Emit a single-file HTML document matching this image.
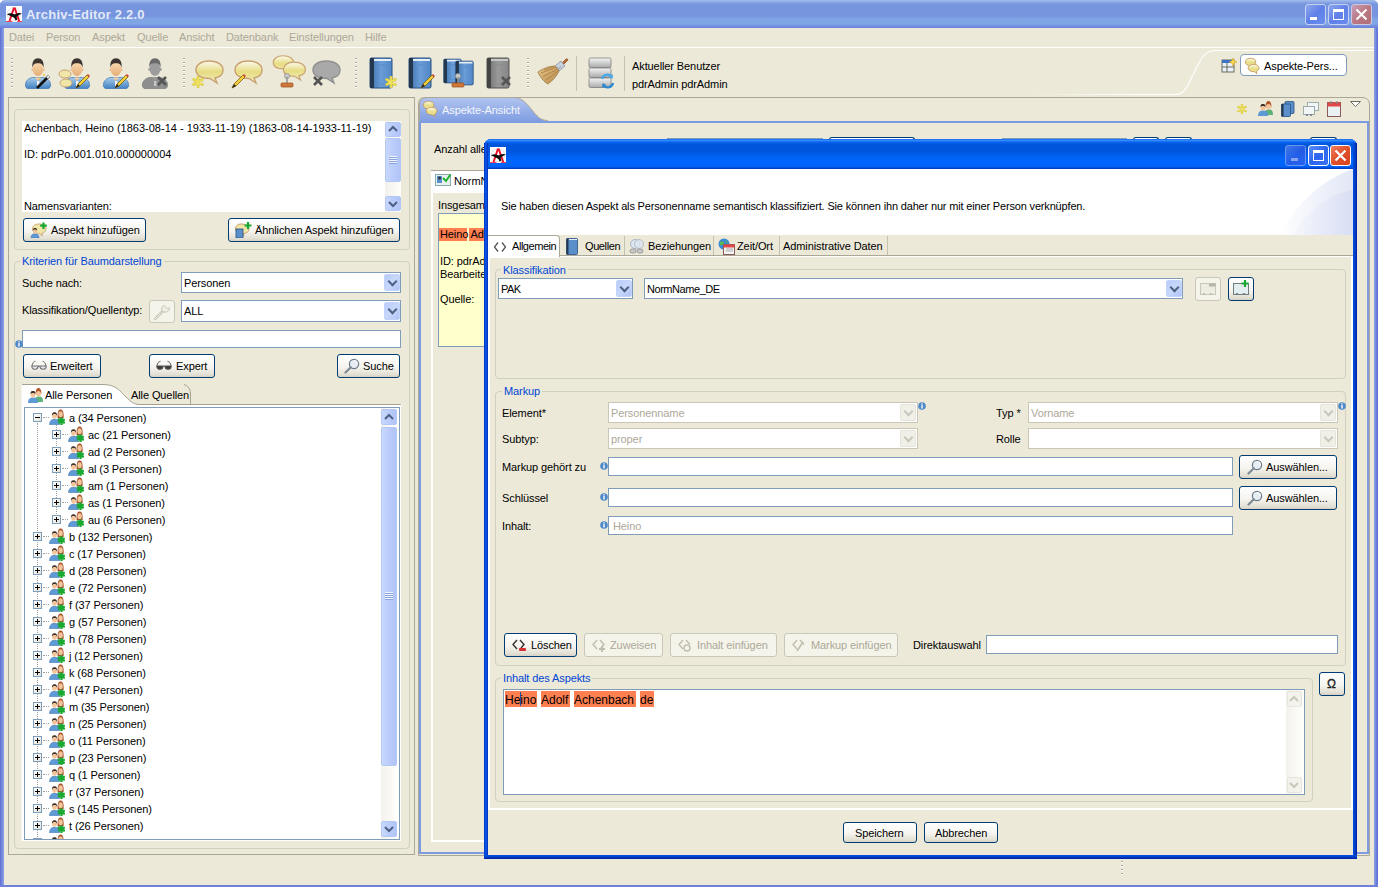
<!DOCTYPE html>
<html><head><meta charset="utf-8">
<style>
*{box-sizing:border-box}
html,body{margin:0;padding:0}
body{width:1378px;height:887px;overflow:hidden;position:relative;background:#ECE9D8;font-family:"Liberation Sans",sans-serif;font-size:11px;line-height:13px;color:#000;letter-spacing:-0.1px}
.a{position:absolute}
.t{position:absolute;white-space:nowrap;line-height:13px}
.g{color:#ACA899}
.bl{color:#0046D5}
.grp{position:absolute;border:1px solid #D0D0BF;border-radius:4px}
.lbl{position:absolute;background:#ECE9D8;padding:0 2px;white-space:nowrap;color:#0046D5;line-height:13px}
.fld{position:absolute;background:#fff;border:1px solid #7F9DB9}
.dfld{position:absolute;background:#fff;border:1px solid #CBC7B8}
.btn{position:absolute;border:1px solid #003C74;border-radius:3px;background:linear-gradient(#FFFFFF 0%,#F5F4EF 55%,#E3E0D4 88%,#D6D0C5 100%)}
.dbtn{position:absolute;border:1px solid #C9C7BA;border-radius:3px;background:#F5F4EA}
.cbb{position:absolute;width:16px;border-radius:2px;background:linear-gradient(135deg,#B9CCFA,#C7D8FB 50%,#AFC4F6);border:1px solid #C3D3FD}
.cbb:after{content:"";position:absolute;left:4px;top:3px;width:5px;height:5px;border-right:2px solid #4D6185;border-bottom:2px solid #4D6185;transform:rotate(45deg)}
.dcbb{position:absolute;width:16px;border-radius:2px;background:#F0EFE8;border:1px solid #E6E4D8}
.dcbb:after{content:"";position:absolute;left:4px;top:3px;width:5px;height:5px;border-right:2px solid #C9C7BA;border-bottom:2px solid #C9C7BA;transform:rotate(45deg)}

.sbb{border:1px solid #B4C8F6;border-radius:2px;background:linear-gradient(90deg,#C9D8FC,#BCCEFB 40%,#B0C4F7)}
.grip{width:8px;height:8px;background:repeating-linear-gradient(#EEF3FE 0 1px,#8CA4DC 1px 2px)}
.ex{width:9px;height:9px;border:1px solid #7B9EBD;background:linear-gradient(135deg,#fff,#E6E3D6)}
.dotl{height:1px;border-top:1px dotted #A0A0A0}
</style></head><body>
<!-- MAIN TITLE BAR -->
<div class="a" style="left:0;top:0;width:1378px;height:28px;background:linear-gradient(#A3BCEC 0px,#8FAAE6 2px,#7794DE 4px,#7794DE 16px,#7FA5E5 19px,#7FA5E5 24px,#6F84DC 27px,#6F84DC 28px)"></div>
<!-- main borders -->
<div class="a" style="left:0;top:28px;width:4px;height:859px;background:linear-gradient(90deg,#5F6FD3,#7A8EDD 60%,#8DA4E6)"></div>
<div class="a" style="left:1374px;top:28px;width:4px;height:859px;background:linear-gradient(90deg,#8DA4E6,#6C80D8 60%,#5F6FD3)"></div>
<div class="a" style="left:0;top:885px;width:1378px;height:2px;background:#7180DA"></div>
<div class="a" style="left:4px;top:47px;width:1370px;height:1px;background:#fff"></div>


<!-- title content -->
<svg class="a" style="left:6px;top:6px" width="16" height="16"><use href="#appicon"/></svg>
<div class="t" style="left:26px;top:7px;font-size:13px;line-height:15px;font-weight:bold;color:#E3EAF8;letter-spacing:0.2px">Archiv-Editor 2.2.0</div>
<div class="a" style="left:1305px;top:4px;width:21px;height:21px;border:1px solid #C6D2F2;border-radius:3px;background:linear-gradient(135deg,#8FA8EE,#5F80E8 50%,#6B8DEE)"></div>
<div class="a" style="left:1310px;top:17px;width:7px;height:3px;background:#fff"></div>
<div class="a" style="left:1328px;top:4px;width:21px;height:21px;border:1px solid #C6D2F2;border-radius:3px;background:linear-gradient(135deg,#8FA8EE,#5F80E8 50%,#6B8DEE)"></div>
<div class="a" style="left:1333px;top:9px;width:11px;height:11px;border:1px solid #fff;border-top-width:3px"></div>
<div class="a" style="left:1351px;top:4px;width:21px;height:21px;border:1px solid #D0C8E0;border-radius:3px;background:linear-gradient(135deg,#C8A0B8,#B97883 50%,#B06E78)"></div>
<svg class="a" style="left:1351px;top:4px" width="21" height="21"><path d="M5.5 5.5 L15.5 15.5 M15.5 5.5 L5.5 15.5" stroke="#fff" stroke-width="2"/></svg>
<svg class="a" style="left:0;top:0" width="6" height="6"><path d="M0 0 H4 C2 0.5 0.5 2 0 4Z" fill="#fff"/></svg>
<svg class="a" style="left:1372px;top:0" width="6" height="6"><path d="M6 0 H2 C4 0.5 5.5 2 6 4Z" fill="#fff"/></svg>
<!-- menu -->
<div class="t g" style="left:9px;top:31px">Datei</div>
<div class="t g" style="left:46px;top:31px">Person</div>
<div class="t g" style="left:92px;top:31px">Aspekt</div>
<div class="t g" style="left:137px;top:31px">Quelle</div>
<div class="t g" style="left:179px;top:31px">Ansicht</div>
<div class="t g" style="left:226px;top:31px">Datenbank</div>
<div class="t g" style="left:289px;top:31px">Einstellungen</div>
<div class="t g" style="left:365px;top:31px">Hilfe</div>
<!-- toolbar -->
<div class="a" style="left:11px;top:58px;width:2px;height:31px;background:repeating-linear-gradient(#ACA899 0 1px,#fff 1px 2px,transparent 2px 4px)"></div>
<svg class="a" style="left:22px;top:57px" width="32" height="32"><use href="#person"/></svg>
<svg class="a" style="left:36px;top:73px" width="16" height="16"><use href="#wand"/></svg>
<svg class="a" style="left:61px;top:57px" width="32" height="32"><use href="#person"/></svg>
<svg class="a" style="left:58px;top:69px" width="16" height="20"><ellipse cx="7" cy="5" rx="6" ry="4" fill="#F0E6A8" stroke="#C8A070"/><ellipse cx="8" cy="14" rx="6" ry="4" fill="#F0E6A8" stroke="#C8A070"/></svg>
<svg class="a" style="left:75px;top:73px" width="16" height="16"><use href="#pencil"/></svg>
<svg class="a" style="left:100px;top:57px" width="32" height="32"><use href="#person"/></svg>
<svg class="a" style="left:114px;top:73px" width="16" height="16"><use href="#pencil"/></svg>
<svg class="a" style="left:139px;top:57px" width="32" height="32"><use href="#personG"/></svg>
<svg class="a" style="left:156px;top:75px" width="12" height="12"><use href="#cross"/></svg>
<div class="a" style="left:183px;top:58px;width:2px;height:31px;background:repeating-linear-gradient(#ACA899 0 1px,#fff 1px 2px,transparent 2px 4px)"></div>
<svg class="a" style="left:193px;top:56px" width="32" height="32"><use href="#bubble"/></svg>
<svg class="a" style="left:192px;top:76px" width="12" height="12"><use href="#star"/></svg>
<svg class="a" style="left:232px;top:56px" width="32" height="32"><use href="#bubble"/></svg>
<svg class="a" style="left:231px;top:73px" width="16" height="16"><use href="#pencil"/></svg>
<svg class="a" style="left:271px;top:52px" width="24" height="24"><use href="#bubble"/></svg>
<svg class="a" style="left:281px;top:58px" width="26" height="26"><use href="#bubble"/></svg>
<svg class="a" style="left:279px;top:72px" width="16" height="16"><use href="#stamp"/></svg>
<svg class="a" style="left:310px;top:56px" width="32" height="32"><use href="#bubbleG"/></svg>
<svg class="a" style="left:312px;top:75px" width="12" height="12"><use href="#cross"/></svg>
<div class="a" style="left:355px;top:58px;width:2px;height:31px;background:repeating-linear-gradient(#ACA899 0 1px,#fff 1px 2px,transparent 2px 4px)"></div>
<svg class="a" style="left:369px;top:57px" width="24" height="32"><use href="#book"/></svg>
<svg class="a" style="left:385px;top:76px" width="12" height="12"><use href="#star"/></svg>
<svg class="a" style="left:408px;top:57px" width="24" height="32"><use href="#book"/></svg>
<svg class="a" style="left:420px;top:73px" width="16" height="16"><use href="#pencil"/></svg>
<svg class="a" style="left:443px;top:58px" width="19" height="26"><use href="#book"/></svg>
<svg class="a" style="left:455px;top:60px" width="19" height="26"><use href="#book"/></svg>
<svg class="a" style="left:450px;top:72px" width="16" height="16"><use href="#stamp"/></svg>
<svg class="a" style="left:486px;top:57px" width="24" height="32"><use href="#bookG"/></svg>
<svg class="a" style="left:500px;top:75px" width="12" height="12"><use href="#cross"/></svg>
<div class="a" style="left:527px;top:58px;width:2px;height:31px;background:repeating-linear-gradient(#ACA899 0 1px,#fff 1px 2px,transparent 2px 4px)"></div>
<svg class="a" style="left:537px;top:57px" width="32" height="28"><defs><linearGradient id="gBr" x1="0" y1="0" x2="1" y2="1"><stop offset="0" stop-color="#E8C890"/><stop offset="1" stop-color="#B88848"/></linearGradient></defs>
<path d="M25 6 L29 2 C30 1 31.5 2.5 30.5 3.5 L26.5 7.5Z" fill="#B8642C" stroke="#804020" stroke-width="0.6"/>
<path d="M18 9 L24 4 L28 9 L22 14Z" fill="#C8D0DC" stroke="#7C8494" stroke-width="0.7"/>
<path d="M19 12 L21 10 M21 13 L24 9" stroke="#8890A0" stroke-width="0.8"/>
<path d="M1 15 C5 12 12 9 18 9 L22 14 C20 19 15 24 11 27 C7 25 3 20 1 15Z" fill="url(#gBr)" stroke="#A07840" stroke-width="0.8"/>
<path d="M4 16 L18.5 10.5 M6 19.5 L20 12.5 M9 23 L21 14 M7 13 L17 9.5" stroke="#A47A3C" stroke-width="0.8"/>
</svg>
<div class="a" style="left:576px;top:56px;width:1px;height:35px;background:#C5C2B2"></div>
<svg class="a" style="left:588px;top:57px" width="28" height="32"><defs><linearGradient id="gDb" x1="0" y1="0" x2="0" y2="1"><stop offset="0" stop-color="#F4F4F4"/><stop offset="0.5" stop-color="#D0D0D0"/><stop offset="1" stop-color="#A8A8A8"/></linearGradient></defs>
<rect x="1" y="1" width="22" height="9.5" rx="1.5" fill="url(#gDb)" stroke="#808080" stroke-width="0.8"/>
<rect x="1" y="11" width="22" height="9.5" rx="1.5" fill="url(#gDb)" stroke="#808080" stroke-width="0.8"/>
<rect x="1" y="21" width="22" height="9.5" rx="1.5" fill="url(#gDb)" stroke="#808080" stroke-width="0.8"/>
<path d="M14 22 A5.5 5.5 0 0 1 23.5 19.5" fill="none" stroke="#48A8E8" stroke-width="2.4"/><path d="M25 17 L24.5 22 L20.5 20Z" fill="#48A8E8"/>
<path d="M25 26 A5.5 5.5 0 0 1 15.5 28.5" fill="none" stroke="#2E88D0" stroke-width="2.4"/><path d="M14 31 L14.5 26 L18.5 28Z" fill="#2E88D0"/>
</svg>
<div class="a" style="left:624px;top:56px;width:1px;height:35px;background:#C5C2B2"></div>
<div class="t" style="left:632px;top:60px">Aktueller Benutzer</div>
<div class="t" style="left:632px;top:78px">pdrAdmin pdrAdmin</div>
<!-- perspective switcher -->
<div class="a" style="left:1030px;top:94px;width:148px;height:1px;background:linear-gradient(90deg,rgba(255,255,255,0),#fff 70%)"></div><svg class="a" style="left:1170px;top:48px" width="204" height="48"><path d="M0 46.5 L6 46.5 C12 46.5 15 43 18 37 C22 29 26 20 30 13 C34 6 38 2.5 46 2.5 L204 2.5" fill="none" stroke="#fff" stroke-width="1.1"/></svg>
<svg class="a" style="left:1221px;top:58px" width="16" height="15"><rect x="1" y="2" width="12" height="12" fill="#EAF2FB" stroke="#6B6B5A"/><rect x="1" y="2" width="12" height="3" fill="#3A73C8"/><path d="M6 5 V14 M1 9 H13" stroke="#6B6B5A"/><path d="M12 0 l1.2 2.8 2.8 1.2 -2.8 1.2 -1.2 2.8 -1.2 -2.8 -2.8 -1.2 2.8 -1.2z" fill="#F6D84A" stroke="#C89A20" stroke-width="0.5"/></svg>
<div class="a" style="left:1240px;top:54px;width:107px;height:22px;border:1px solid #7F9DB9;border-radius:4px;background:#fff"></div>
<svg class="a" style="left:1245px;top:57px" width="16" height="18"><use href="#bub2"/></svg>
<div class="t" style="left:1264px;top:60px">Aspekte-Pers...</div>


<!-- LEFT PANEL -->
<div class="a" style="left:8px;top:97px;width:407px;height:758px;border:1px solid #ACA899;"></div>
<div class="grp" style="left:14px;top:109px;width:396px;height:141px"></div>
<div class="a" style="left:22px;top:121px;width:379px;height:91px;background:#fff"></div>
<div class="t" style="left:24px;top:122px;letter-spacing:0">Achenbach, Heino (1863-08-14 - 1933-11-19) (1863-08-14-1933-11-19)</div>
<div class="t" style="left:24px;top:148px;letter-spacing:0">ID: pdrPo.001.010.000000004</div>
<div class="a" style="left:22px;top:121px;width:363px;height:91px;overflow:hidden"><div class="t" style="left:2px;top:79px">Namensvarianten:</div></div>
<!-- scrollbar -->
<div class="a" style="left:385px;top:121px;width:16px;height:91px;background:linear-gradient(90deg,#F3F1EC,#FEFEFB)"></div>
<div class="a sbb" style="left:385px;top:122px;width:16px;height:15px"></div>
<svg class="a" style="left:385px;top:121px" width="16" height="16"><use href="#upA"/></svg>
<div class="a sbb" style="left:385px;top:138px;width:16px;height:44px"></div>
<div class="a grip" style="left:389px;top:156px"></div>
<div class="a sbb" style="left:385px;top:196px;width:16px;height:15px"></div>
<svg class="a" style="left:385px;top:196px" width="16" height="16"><use href="#dnA"/></svg>
<div class="btn" style="left:23px;top:218px;width:123px;height:24px"></div>
<svg class="a" style="left:30px;top:222px" width="18" height="16"><use href="#addasp"/></svg>
<div class="t" style="left:51px;top:224px">Aspekt hinzufügen</div>
<div class="btn" style="left:228px;top:218px;width:172px;height:24px"></div>
<svg class="a" style="left:235px;top:222px" width="18" height="16"><use href="#addasp2"/></svg>
<div class="t" style="left:255px;top:224px">Ähnlichen Aspekt hinzufügen</div>
<!-- Kriterien -->
<div class="grp" style="left:14px;top:261px;width:396px;height:588px"></div>
<div class="lbl" style="left:20px;top:255px">Kriterien für Baumdarstellung</div>
<div class="t" style="left:22px;top:277px">Suche nach:</div>
<div class="fld" style="left:181px;top:272px;width:220px;height:21px"></div>
<div class="t" style="left:184px;top:277px">Personen</div>
<div class="cbb" style="left:384px;top:274px;height:17px"></div>
<div class="t" style="left:22px;top:304px">Klassifikation/Quellentyp:</div>
<div class="dbtn" style="left:149px;top:300px;width:26px;height:23px"></div>
<svg class="a" style="left:149px;top:299px" width="26" height="24"><path d="M6 20 L14.5 11.5" stroke="#C9C6B6" stroke-width="2.6" stroke-linecap="round"/><path d="M6 20 L14.5 11.5" stroke="#F4F3EC" stroke-width="1" stroke-linecap="round" stroke-dasharray="1 1"/><path d="M13 12.5 C12 10 13 7 15.5 6.5 L17 8.5 L18.5 10 L20.5 8.5 C21 11 18.5 13.5 15.5 13Z" fill="#F0EFE6" stroke="#C9C6B6" stroke-width="1"/></svg>
<div class="fld" style="left:181px;top:300px;width:220px;height:22px"></div>
<div class="t" style="left:184px;top:305px">ALL</div>
<div class="cbb" style="left:384px;top:302px;height:18px"></div>
<div class="fld" style="left:22px;top:330px;width:379px;height:18px"></div>
<svg class="a" style="left:15px;top:340px" width="8" height="8"><use href="#info"/></svg>
<div class="btn" style="left:23px;top:354px;width:78px;height:24px"></div>
<svg class="a" style="left:31px;top:360px" width="16" height="10"><use href="#glass"/></svg>
<div class="t" style="left:50px;top:360px">Erweitert</div>
<div class="btn" style="left:149px;top:354px;width:66px;height:24px"></div>
<svg class="a" style="left:156px;top:360px" width="16" height="10"><use href="#glassD"/></svg>
<div class="t" style="left:176px;top:360px">Expert</div>
<div class="btn" style="left:337px;top:354px;width:63px;height:24px"></div>
<svg class="a" style="left:344px;top:358px" width="16" height="16"><use href="#mag"/></svg>
<div class="t" style="left:363px;top:360px">Suche</div>
<!-- tabs -->
<div class="a" style="left:22px;top:404px;width:379px;height:437px;background:#fff"></div>
<div class="a" style="left:21px;top:384px;width:1px;height:457px;background:#F4F3EE"></div>
<svg class="a" style="left:20px;top:383px" width="382" height="23"><path d="M2 23 V1.5 L83 1.5 C96 1.5 100 8 106 14 C111 19 114 21.5 120 21.5 L382 21.5 V23Z" fill="#fff"/><path d="M2 1.5 L83 1.5 C96 1.5 100 8 106 14 C111 19 114 21.5 120 21.5 L381 21.5" fill="none" stroke="#A5A28F"/><path d="M164 1.5 C168 3 170.5 6 170.5 10 L170.5 21.5" fill="none" stroke="#A5A28F"/></svg>
<svg class="a" style="left:27px;top:387px" width="16" height="16"><use href="#people"/></svg>
<div class="t" style="left:45px;top:389px">Alle Personen</div>
<div class="t" style="left:131px;top:389px">Alle Quellen</div>
<div class="a" style="left:24px;top:407px;width:376px;height:433px;background:#fff;border:1px solid #7F9DB9;overflow:hidden">
<div class="a" style="left:-24px;top:-407px;width:420px;height:900px">
<div class="a" style="left:36px;top:422px;width:1px;height:420px;border-left:1px dotted #A0A0A0"></div>
<div class="a" style="left:55px;top:422px;width:1px;height:93px;border-left:1px dotted #A0A0A0"></div>
<div class="a ex" style="left:32px;top:412px"></div>
<div class="a" style="left:34px;top:416px;width:5px;height:1px;background:#000"></div>
<div class="a dotl" style="left:42px;top:416px;width:6px"></div>
<svg class="a" style="left:48px;top:408px" width="16" height="16"><use href="#treeico"/></svg>
<div class="t" style="left:68px;top:411px">a (34 Personen)</div>
<div class="a ex" style="left:51px;top:429px"></div>
<div class="a" style="left:55px;top:431px;width:1px;height:5px;background:#000"></div>
<div class="a" style="left:53px;top:433px;width:5px;height:1px;background:#000"></div>
<div class="a dotl" style="left:61px;top:433px;width:6px"></div>
<svg class="a" style="left:67px;top:425px" width="16" height="16"><use href="#treeico"/></svg>
<div class="t" style="left:87px;top:428px">ac (21 Personen)</div>
<div class="a ex" style="left:51px;top:446px"></div>
<div class="a" style="left:55px;top:448px;width:1px;height:5px;background:#000"></div>
<div class="a" style="left:53px;top:450px;width:5px;height:1px;background:#000"></div>
<div class="a dotl" style="left:61px;top:450px;width:6px"></div>
<svg class="a" style="left:67px;top:442px" width="16" height="16"><use href="#treeico"/></svg>
<div class="t" style="left:87px;top:445px">ad (2 Personen)</div>
<div class="a ex" style="left:51px;top:463px"></div>
<div class="a" style="left:55px;top:465px;width:1px;height:5px;background:#000"></div>
<div class="a" style="left:53px;top:467px;width:5px;height:1px;background:#000"></div>
<div class="a dotl" style="left:61px;top:467px;width:6px"></div>
<svg class="a" style="left:67px;top:459px" width="16" height="16"><use href="#treeico"/></svg>
<div class="t" style="left:87px;top:462px">al (3 Personen)</div>
<div class="a ex" style="left:51px;top:480px"></div>
<div class="a" style="left:55px;top:482px;width:1px;height:5px;background:#000"></div>
<div class="a" style="left:53px;top:484px;width:5px;height:1px;background:#000"></div>
<div class="a dotl" style="left:61px;top:484px;width:6px"></div>
<svg class="a" style="left:67px;top:476px" width="16" height="16"><use href="#treeico"/></svg>
<div class="t" style="left:87px;top:479px">am (1 Personen)</div>
<div class="a ex" style="left:51px;top:497px"></div>
<div class="a" style="left:55px;top:499px;width:1px;height:5px;background:#000"></div>
<div class="a" style="left:53px;top:501px;width:5px;height:1px;background:#000"></div>
<div class="a dotl" style="left:61px;top:501px;width:6px"></div>
<svg class="a" style="left:67px;top:493px" width="16" height="16"><use href="#treeico"/></svg>
<div class="t" style="left:87px;top:496px">as (1 Personen)</div>
<div class="a ex" style="left:51px;top:514px"></div>
<div class="a" style="left:55px;top:516px;width:1px;height:5px;background:#000"></div>
<div class="a" style="left:53px;top:518px;width:5px;height:1px;background:#000"></div>
<div class="a dotl" style="left:61px;top:518px;width:6px"></div>
<svg class="a" style="left:67px;top:510px" width="16" height="16"><use href="#treeico"/></svg>
<div class="t" style="left:87px;top:513px">au (6 Personen)</div>
<div class="a ex" style="left:32px;top:531px"></div>
<div class="a" style="left:36px;top:533px;width:1px;height:5px;background:#000"></div>
<div class="a" style="left:34px;top:535px;width:5px;height:1px;background:#000"></div>
<div class="a dotl" style="left:42px;top:535px;width:6px"></div>
<svg class="a" style="left:48px;top:527px" width="16" height="16"><use href="#treeico"/></svg>
<div class="t" style="left:68px;top:530px">b (132 Personen)</div>
<div class="a ex" style="left:32px;top:548px"></div>
<div class="a" style="left:36px;top:550px;width:1px;height:5px;background:#000"></div>
<div class="a" style="left:34px;top:552px;width:5px;height:1px;background:#000"></div>
<div class="a dotl" style="left:42px;top:552px;width:6px"></div>
<svg class="a" style="left:48px;top:544px" width="16" height="16"><use href="#treeico"/></svg>
<div class="t" style="left:68px;top:547px">c (17 Personen)</div>
<div class="a ex" style="left:32px;top:565px"></div>
<div class="a" style="left:36px;top:567px;width:1px;height:5px;background:#000"></div>
<div class="a" style="left:34px;top:569px;width:5px;height:1px;background:#000"></div>
<div class="a dotl" style="left:42px;top:569px;width:6px"></div>
<svg class="a" style="left:48px;top:561px" width="16" height="16"><use href="#treeico"/></svg>
<div class="t" style="left:68px;top:564px">d (28 Personen)</div>
<div class="a ex" style="left:32px;top:582px"></div>
<div class="a" style="left:36px;top:584px;width:1px;height:5px;background:#000"></div>
<div class="a" style="left:34px;top:586px;width:5px;height:1px;background:#000"></div>
<div class="a dotl" style="left:42px;top:586px;width:6px"></div>
<svg class="a" style="left:48px;top:578px" width="16" height="16"><use href="#treeico"/></svg>
<div class="t" style="left:68px;top:581px">e (72 Personen)</div>
<div class="a ex" style="left:32px;top:599px"></div>
<div class="a" style="left:36px;top:601px;width:1px;height:5px;background:#000"></div>
<div class="a" style="left:34px;top:603px;width:5px;height:1px;background:#000"></div>
<div class="a dotl" style="left:42px;top:603px;width:6px"></div>
<svg class="a" style="left:48px;top:595px" width="16" height="16"><use href="#treeico"/></svg>
<div class="t" style="left:68px;top:598px">f (37 Personen)</div>
<div class="a ex" style="left:32px;top:616px"></div>
<div class="a" style="left:36px;top:618px;width:1px;height:5px;background:#000"></div>
<div class="a" style="left:34px;top:620px;width:5px;height:1px;background:#000"></div>
<div class="a dotl" style="left:42px;top:620px;width:6px"></div>
<svg class="a" style="left:48px;top:612px" width="16" height="16"><use href="#treeico"/></svg>
<div class="t" style="left:68px;top:615px">g (57 Personen)</div>
<div class="a ex" style="left:32px;top:633px"></div>
<div class="a" style="left:36px;top:635px;width:1px;height:5px;background:#000"></div>
<div class="a" style="left:34px;top:637px;width:5px;height:1px;background:#000"></div>
<div class="a dotl" style="left:42px;top:637px;width:6px"></div>
<svg class="a" style="left:48px;top:629px" width="16" height="16"><use href="#treeico"/></svg>
<div class="t" style="left:68px;top:632px">h (78 Personen)</div>
<div class="a ex" style="left:32px;top:650px"></div>
<div class="a" style="left:36px;top:652px;width:1px;height:5px;background:#000"></div>
<div class="a" style="left:34px;top:654px;width:5px;height:1px;background:#000"></div>
<div class="a dotl" style="left:42px;top:654px;width:6px"></div>
<svg class="a" style="left:48px;top:646px" width="16" height="16"><use href="#treeico"/></svg>
<div class="t" style="left:68px;top:649px">j (12 Personen)</div>
<div class="a ex" style="left:32px;top:667px"></div>
<div class="a" style="left:36px;top:669px;width:1px;height:5px;background:#000"></div>
<div class="a" style="left:34px;top:671px;width:5px;height:1px;background:#000"></div>
<div class="a dotl" style="left:42px;top:671px;width:6px"></div>
<svg class="a" style="left:48px;top:663px" width="16" height="16"><use href="#treeico"/></svg>
<div class="t" style="left:68px;top:666px">k (68 Personen)</div>
<div class="a ex" style="left:32px;top:684px"></div>
<div class="a" style="left:36px;top:686px;width:1px;height:5px;background:#000"></div>
<div class="a" style="left:34px;top:688px;width:5px;height:1px;background:#000"></div>
<div class="a dotl" style="left:42px;top:688px;width:6px"></div>
<svg class="a" style="left:48px;top:680px" width="16" height="16"><use href="#treeico"/></svg>
<div class="t" style="left:68px;top:683px">l (47 Personen)</div>
<div class="a ex" style="left:32px;top:701px"></div>
<div class="a" style="left:36px;top:703px;width:1px;height:5px;background:#000"></div>
<div class="a" style="left:34px;top:705px;width:5px;height:1px;background:#000"></div>
<div class="a dotl" style="left:42px;top:705px;width:6px"></div>
<svg class="a" style="left:48px;top:697px" width="16" height="16"><use href="#treeico"/></svg>
<div class="t" style="left:68px;top:700px">m (35 Personen)</div>
<div class="a ex" style="left:32px;top:718px"></div>
<div class="a" style="left:36px;top:720px;width:1px;height:5px;background:#000"></div>
<div class="a" style="left:34px;top:722px;width:5px;height:1px;background:#000"></div>
<div class="a dotl" style="left:42px;top:722px;width:6px"></div>
<svg class="a" style="left:48px;top:714px" width="16" height="16"><use href="#treeico"/></svg>
<div class="t" style="left:68px;top:717px">n (25 Personen)</div>
<div class="a ex" style="left:32px;top:735px"></div>
<div class="a" style="left:36px;top:737px;width:1px;height:5px;background:#000"></div>
<div class="a" style="left:34px;top:739px;width:5px;height:1px;background:#000"></div>
<div class="a dotl" style="left:42px;top:739px;width:6px"></div>
<svg class="a" style="left:48px;top:731px" width="16" height="16"><use href="#treeico"/></svg>
<div class="t" style="left:68px;top:734px">o (11 Personen)</div>
<div class="a ex" style="left:32px;top:752px"></div>
<div class="a" style="left:36px;top:754px;width:1px;height:5px;background:#000"></div>
<div class="a" style="left:34px;top:756px;width:5px;height:1px;background:#000"></div>
<div class="a dotl" style="left:42px;top:756px;width:6px"></div>
<svg class="a" style="left:48px;top:748px" width="16" height="16"><use href="#treeico"/></svg>
<div class="t" style="left:68px;top:751px">p (23 Personen)</div>
<div class="a ex" style="left:32px;top:769px"></div>
<div class="a" style="left:36px;top:771px;width:1px;height:5px;background:#000"></div>
<div class="a" style="left:34px;top:773px;width:5px;height:1px;background:#000"></div>
<div class="a dotl" style="left:42px;top:773px;width:6px"></div>
<svg class="a" style="left:48px;top:765px" width="16" height="16"><use href="#treeico"/></svg>
<div class="t" style="left:68px;top:768px">q (1 Personen)</div>
<div class="a ex" style="left:32px;top:786px"></div>
<div class="a" style="left:36px;top:788px;width:1px;height:5px;background:#000"></div>
<div class="a" style="left:34px;top:790px;width:5px;height:1px;background:#000"></div>
<div class="a dotl" style="left:42px;top:790px;width:6px"></div>
<svg class="a" style="left:48px;top:782px" width="16" height="16"><use href="#treeico"/></svg>
<div class="t" style="left:68px;top:785px">r (37 Personen)</div>
<div class="a ex" style="left:32px;top:803px"></div>
<div class="a" style="left:36px;top:805px;width:1px;height:5px;background:#000"></div>
<div class="a" style="left:34px;top:807px;width:5px;height:1px;background:#000"></div>
<div class="a dotl" style="left:42px;top:807px;width:6px"></div>
<svg class="a" style="left:48px;top:799px" width="16" height="16"><use href="#treeico"/></svg>
<div class="t" style="left:68px;top:802px">s (145 Personen)</div>
<div class="a ex" style="left:32px;top:820px"></div>
<div class="a" style="left:36px;top:822px;width:1px;height:5px;background:#000"></div>
<div class="a" style="left:34px;top:824px;width:5px;height:1px;background:#000"></div>
<div class="a dotl" style="left:42px;top:824px;width:6px"></div>
<svg class="a" style="left:48px;top:816px" width="16" height="16"><use href="#treeico"/></svg>
<div class="t" style="left:68px;top:819px">t (26 Personen)</div>
<div class="a ex" style="left:32px;top:837px"></div>
<div class="a" style="left:36px;top:839px;width:1px;height:5px;background:#000"></div>
<div class="a" style="left:34px;top:841px;width:5px;height:1px;background:#000"></div>
<div class="a dotl" style="left:42px;top:841px;width:6px"></div>
<svg class="a" style="left:48px;top:833px" width="16" height="16"><use href="#treeico"/></svg>
<div class="t" style="left:68px;top:836px">u (9 Personen)</div>
</div></div>
<div class="a" style="left:381px;top:408px;width:16px;height:431px;background:linear-gradient(90deg,#F3F1EC,#FEFEFB)"></div>
<div class="a sbb" style="left:381px;top:409px;width:16px;height:16px"></div>
<svg class="a" style="left:381px;top:409px" width="16" height="16"><use href="#upA"/></svg>
<div class="a sbb" style="left:381px;top:427px;width:16px;height:339px"></div>
<div class="a grip" style="left:385px;top:592px"></div>
<div class="a sbb" style="left:381px;top:821px;width:16px;height:16px"></div>
<svg class="a" style="left:381px;top:821px" width="16" height="16"><use href="#dnA"/></svg>


<!-- RIGHT PANEL -->
<svg class="a" style="left:418px;top:96px" width="952" height="760"><path d="M0.5 759.5 V8 Q0.5 1.5 7 1.5 L944 1.5 Q951.5 1.5 951.5 9 V759.5 Z" fill="#ECE9D8" stroke="#ACA899"/></svg>
<div class="a" style="left:419px;top:121px;width:950px;height:2px;background:#7C9BE0"></div>
<div class="a" style="left:419px;top:121px;width:2px;height:733px;background:#7C9BE0"></div>
<div class="a" style="left:1367px;top:121px;width:2px;height:733px;background:#7C9BE0"></div>
<div class="a" style="left:419px;top:852px;width:950px;height:2px;background:#7C9BE0"></div>
<svg class="a" style="left:419px;top:97px" width="140" height="26"><defs><linearGradient id="gTab" x1="0" y1="0" x2="0" y2="1"><stop offset="0" stop-color="#B2C4F0"/><stop offset="1" stop-color="#7C9BE0"/></linearGradient></defs><path d="M0 26 V8 Q0 0.5 8 0.5 L95 0.5 C103 0.5 107 6 113 13 C118 19 121 24 130 24 L140 24 V26Z" fill="url(#gTab)"/><path d="M0.5 24 V8 Q0.5 0.5 8 0.5 L95 0.5 C103 0.5 107 6 113 13 C118 19 121 23.5 129 23.5" fill="none" stroke="#ACA899" stroke-width="1"/></svg>
<svg class="a" style="left:423px;top:100px" width="16" height="18"><use href="#bub2"/></svg>
<div class="t" style="left:442px;top:104px;color:#F2F5FC">Aspekte-Ansicht</div>
<svg class="a" style="left:1237px;top:104px" width="10" height="10"><use href="#star"/></svg>
<svg class="a" style="left:1257px;top:100px" width="16" height="16"><use href="#people"/></svg>
<svg class="a" style="left:1281px;top:101px" width="14" height="16"><rect x="4" y="0.5" width="9" height="12" rx="1" fill="#5A8FCC" stroke="#2A4F80" stroke-width="0.8"/><rect x="0.5" y="3" width="9" height="12.5" rx="1" fill="#5A8FCC" stroke="#2A4F80" stroke-width="0.8"/><rect x="0.5" y="3" width="2" height="12.5" fill="#23384F"/></svg>
<svg class="a" style="left:1303px;top:102px" width="16" height="14"><rect x="4.5" y="0.5" width="11" height="8" fill="#F3F6F6" stroke="#9AACAC"/><rect x="0.5" y="4.5" width="11" height="8" fill="#F3F6F6" stroke="#9AACAC"/><path d="M3 12 l1 2 1 -2 M7 12 l1 2 1 -2" stroke="#778" fill="none"/></svg>
<svg class="a" style="left:1327px;top:101px" width="14" height="16"><rect x="0.5" y="1.5" width="13" height="14" fill="#EAF1F3" stroke="#8C5A5A"/><rect x="0.5" y="1.5" width="13" height="4" fill="#E04848"/><path d="M4 0 V3 M10 0 V3" stroke="#888" stroke-width="1.2"/></svg>
<svg class="a" style="left:1350px;top:101px" width="11" height="7"><path d="M0.5 0.5 L10.5 0.5 L5.5 5.5Z" fill="#fff" stroke="#6E6E60"/></svg>
<div class="t" style="left:434px;top:143px">Anzahl alle</div>
<!-- peeking widgets behind dialog -->
<div class="a" style="left:667px;top:138px;width:156px;height:4px;border-top:1px solid #7F9DB9;background:#fff"></div>
<div class="a" style="left:829px;top:137px;width:86px;height:6px;border:1px solid #003C74;border-bottom:none;border-radius:3px 3px 0 0;background:#fff"></div>
<div class="a" style="left:1002px;top:138px;width:125px;height:4px;border-top:1px solid #7F9DB9;background:#fff"></div>
<div class="a" style="left:1133px;top:137px;width:26px;height:6px;border:1px solid #003C74;border-bottom:none;border-radius:3px 3px 0 0;background:#fff"></div>
<div class="a" style="left:1165px;top:137px;width:27px;height:6px;border:1px solid #003C74;border-bottom:none;border-radius:3px 3px 0 0;background:#fff"></div>
<div class="a" style="left:1310px;top:137px;width:27px;height:6px;border:1px solid #003C74;border-bottom:none;border-radius:3px 3px 0 0;background:#fff"></div>
<!-- sub tab folder -->
<div class="a" style="left:431px;top:170px;width:2px;height:672px;background:#fff"></div>
<div class="a" style="left:431px;top:840px;width:60px;height:2px;background:#fff"></div>
<div class="a" style="left:431px;top:170px;width:60px;height:1px;background:#ACA899"></div>
<div class="a" style="left:432px;top:171px;width:60px;height:22px;background:#fff"></div>
<svg class="a" style="left:435px;top:173px" width="16" height="14"><rect x="0.5" y="1.5" width="15" height="11" fill="#E8F0F2" stroke="#8AA"/><rect x="2" y="3" width="5" height="7" fill="#5A8FCC"/><circle cx="4.5" cy="5" r="1.5" fill="#333"/><path d="M8 5 L11 8 L15.5 1.5" stroke="#22B030" stroke-width="2" fill="none"/></svg>
<div class="t" style="left:454px;top:175px">NormName</div>
<div class="t" style="left:438px;top:199px">Insgesamt</div>
<div class="a" style="left:438px;top:213px;width:60px;height:134px;background:#FFFFCC;border:1px solid #7F9DB9"></div>
<div class="a" style="left:439px;top:228px;width:28px;height:13px;background:#FF7F50"></div>
<div class="a" style="left:469px;top:228px;width:30px;height:13px;background:#FF7F50"></div>
<div class="t" style="left:440px;top:228px">Heino Adolf</div>
<div class="t" style="left:440px;top:255px">ID: pdrAdmin</div>
<div class="t" style="left:440px;top:268px">Bearbeitet</div>
<div class="t" style="left:440px;top:293px">Quelle:</div>


<!-- DIALOG -->
<div class="a" id="dlg" style="left:484px;top:139px;width:873px;height:720px;overflow:hidden">
<div class="a" style="left:0;top:0;width:873px;height:720px;border-radius:7px 7px 0 0;background:linear-gradient(90deg,#0019CF,#0831D9 2px,#166AEE 4px,#0054E3 5px) left/873px 720px;"></div>
<div class="a" style="left:869px;top:6px;width:4px;height:714px;background:linear-gradient(90deg,#0054E3,#0040C8 2px,#001EA0 4px)"></div>
<div class="a" style="left:0;top:716px;width:873px;height:4px;background:linear-gradient(#0054E3,#0040C8 2px,#001EA0 4px)"></div>
<div class="a" style="left:0;top:0;width:873px;height:30px;border-radius:7px 7px 0 0;background:linear-gradient(#0050E0 0px,#3D95FF 1px,#0A66F0 3px,#0055DD 5px,#0055DD 12px,#0062F4 18px,#0065FF 22px,#0062F8 28px,#0040C8 29px,#0040C8 30px)"></div>
<div class="a" style="left:0;top:4px;width:4px;height:712px;background:linear-gradient(90deg,#0030C0,#0858E8 40%,#0848D8 70%,#0030B8)"></div>
<div class="a" style="left:869px;top:4px;width:4px;height:712px;background:linear-gradient(90deg,#0050E0,#0040C8 50%,#001EA0)"></div>
<svg class="a" style="left:6px;top:8px" width="16" height="16"><use href="#appicon"/></svg>
<div class="a" style="left:801px;top:6px;width:21px;height:21px;border:1px solid #7DA2F6;border-radius:3px;background:linear-gradient(135deg,#4A7EF0,#2A5EE6 50%,#2F64EC);opacity:0.85"></div>
<div class="a" style="left:807px;top:19px;width:7px;height:3px;background:#88A4EC"></div>
<div class="a" style="left:824px;top:6px;width:21px;height:21px;border:1px solid #fff;border-radius:3px;background:linear-gradient(135deg,#5C8EF8,#2D66EE 50%,#3A72F2)"></div>
<div class="a" style="left:829px;top:11px;width:11px;height:11px;border:1px solid #fff;border-top-width:3px"></div>
<div class="a" style="left:846px;top:6px;width:21px;height:21px;border:1px solid #fff;border-radius:3px;background:linear-gradient(135deg,#F08060,#E04E2A 50%,#D8431F)"></div>
<svg class="a" style="left:846px;top:6px" width="21" height="21"><path d="M5.5 5.5 L15.5 15.5 M15.5 5.5 L5.5 15.5" stroke="#fff" stroke-width="2.2"/></svg>
<!-- client -->
<div class="a" style="left:4px;top:30px;width:865px;height:686px;background:#ECE9D8"></div>
<div class="a" style="left:4px;top:30px;width:865px;height:66px;background:#fff;overflow:hidden">
  <svg class="a" style="left:640px;top:0" width="225" height="66"><defs><linearGradient id="gSw1" x1="0" y1="0" x2="1" y2="0"><stop offset="0" stop-color="#fff"/><stop offset="1" stop-color="#E2E7F6"/></linearGradient><linearGradient id="gSw2" x1="0" y1="0" x2="1" y2="0"><stop offset="0" stop-color="#F6F7FC"/><stop offset="1" stop-color="#D8DEF4"/></linearGradient></defs><path d="M151 66 C163 45 185 14 225 0 V66Z" fill="url(#gSw1)"/><path d="M165 66 C176 46 196 26 225 21 V66Z" fill="url(#gSw2)"/></svg>
</div>
<div class="t" style="left:17px;top:61px;letter-spacing:-0.166px">Sie haben diesen Aspekt als Personenname semantisch klassifiziert. Sie können ihn daher nur mit einer Person verknüpfen.</div>
<!-- tabs -->
<div class="a" style="left:4px;top:116px;width:865px;height:1px;background:#ACA899"></div>
<div class="a" style="left:4px;top:117px;width:865px;height:1px;background:#fff"></div>
<div class="a" style="left:4px;top:96px;width:72px;height:22px;background:#fff;border-top:1px solid #ACA899;border-right:1px solid #ACA899;border-top-right-radius:4px"></div>
<div class="a" style="left:4px;top:117px;width:71px;height:2px;background:#fff"></div>
<div class="a" style="left:4px;top:117px;width:2px;height:553px;background:#fff"></div>
<div class="a" style="left:867px;top:117px;width:2px;height:553px;background:#fff"></div>
<div class="a" style="left:140px;top:97px;width:1px;height:19px;background:#C5C2B2"></div>
<div class="a" style="left:229px;top:97px;width:1px;height:19px;background:#C5C2B2"></div>
<div class="a" style="left:295px;top:97px;width:1px;height:19px;background:#C5C2B2"></div>
<div class="a" style="left:403px;top:97px;width:1px;height:19px;background:#C5C2B2"></div>
<svg class="a" style="left:9px;top:102px" width="14" height="12"><path d="M5 1.5 L1.5 6 L5 10.5 M9 1.5 L12.5 6 L9 10.5" stroke="#555" stroke-width="1.3" fill="none"/></svg>
<div class="t" style="left:28px;top:101px;letter-spacing:-0.45px">Allgemein</div>
<svg class="a" style="left:82px;top:99px" width="12" height="17"><rect x="0.5" y="0.5" width="11" height="16" rx="1" fill="#5A8FCC" stroke="#2A4F80" stroke-width="0.8"/><rect x="0.5" y="0.5" width="2" height="16" fill="#23384F"/><rect x="3" y="1" width="8" height="1" fill="#E6EEF6"/></svg>
<div class="t" style="left:101px;top:101px;letter-spacing:-0.4px">Quellen</div>
<svg class="a" style="left:145px;top:99px" width="16" height="16"><circle cx="6" cy="6" r="4.5" fill="#DDE6F0" stroke="#A8B4C0"/><circle cx="10" cy="6" r="4.5" fill="#DDE6F0" stroke="#A8B4C0" opacity="0.8"/><rect x="1" y="11" width="6" height="4" rx="2" fill="#C8C8C8" stroke="#888" stroke-width="0.7"/><rect x="8" y="11" width="6" height="4" rx="2" fill="#C8C8C8" stroke="#888" stroke-width="0.7"/></svg>
<div class="t" style="left:164px;top:101px">Beziehungen</div>
<svg class="a" style="left:234px;top:99px" width="17" height="17"><circle cx="6" cy="6" r="5.5" fill="#3A8AD8"/><path d="M2 4 Q5 2 6 5 Q4 8 2 7Z M7 2 Q10 3 9 6" fill="#5CB845"/><rect x="5.5" y="6.5" width="11" height="10" fill="#F4F4F4" stroke="#8C5A5A"/><rect x="5.5" y="6.5" width="11" height="3" fill="#E04848"/><path d="M8 11 H15 M8 13 H15" stroke="#AAA"/></svg>
<div class="t" style="left:253px;top:101px">Zeit/Ort</div>
<div class="t" style="left:299px;top:101px">Administrative Daten</div>
<!-- Klassifikation group -->
<div class="grp" style="left:11px;top:130px;width:851px;height:110px"></div>
<div class="lbl" style="left:17px;top:125px">Klassifikation</div>
<div class="fld" style="left:14px;top:139px;width:135px;height:21px"></div>
<div class="t" style="left:17px;top:144px;letter-spacing:-0.6px">PAK</div>
<div class="cbb" style="left:132px;top:141px;height:17px"></div>
<div class="fld" style="left:160px;top:139px;width:539px;height:21px"></div>
<div class="t" style="left:163px;top:144px;letter-spacing:-0.45px">NormName_DE</div>
<div class="cbb" style="left:682px;top:141px;height:17px"></div>
<div class="dbtn" style="left:711px;top:138px;width:26px;height:24px"></div>
<svg class="a" style="left:716px;top:142px" width="16" height="16"><rect x="0.5" y="2.5" width="15" height="11" fill="#EEEDE4" stroke="#C9C7BA"/><rect x="9" y="2.5" width="6.5" height="3" fill="#B8B5A6"/><path d="M3 12 l1 1.5 1 -1.5 M10 12 l1 1.5 1 -1.5" stroke="#C0BDAE" fill="none"/></svg>
<div class="btn" style="left:744px;top:138px;width:26px;height:24px"></div>
<svg class="a" style="left:749px;top:141px" width="17" height="17"><rect x="0.5" y="3.5" width="15" height="11" fill="#E4EEF0" stroke="#6E7E80"/><path d="M3 13 l1 1.5 1 -1.5 M10 13 l1 1.5 1 -1.5" stroke="#6E7E80" fill="none"/><path d="M12 0 V7 M8.5 3.5 H15.5" stroke="#1BA832" stroke-width="2.2"/></svg>
<!-- Markup group -->
<div class="grp" style="left:11px;top:252px;width:851px;height:275px"></div>
<div class="lbl" style="left:18px;top:246px">Markup</div>
<div class="t" style="left:18px;top:268px">Element*</div>
<div class="dfld" style="left:124px;top:263px;width:310px;height:21px"></div>
<div class="t" style="left:127px;top:268px;color:#ACA899">Personenname</div>
<div class="dcbb" style="left:416px;top:265px;height:17px"></div>
<svg class="a" style="left:434px;top:263px" width="8" height="8"><use href="#info"/></svg>
<div class="t" style="left:18px;top:294px">Subtyp:</div>
<div class="dfld" style="left:124px;top:289px;width:310px;height:21px"></div>
<div class="t" style="left:127px;top:294px;color:#ACA899">proper</div>
<div class="dcbb" style="left:416px;top:291px;height:17px"></div>
<div class="t" style="left:512px;top:268px">Typ *</div>
<div class="dfld" style="left:544px;top:263px;width:310px;height:21px"></div>
<div class="t" style="left:547px;top:268px;color:#ACA899">Vorname</div>
<div class="dcbb" style="left:836px;top:265px;height:17px"></div>
<svg class="a" style="left:854px;top:263px" width="8" height="8"><use href="#info"/></svg>
<div class="t" style="left:512px;top:294px">Rolle</div>
<div class="dfld" style="left:544px;top:289px;width:310px;height:21px"></div>
<div class="dcbb" style="left:836px;top:291px;height:17px"></div>
<div class="t" style="left:18px;top:322px">Markup gehört zu</div>
<svg class="a" style="left:116px;top:323px" width="8" height="8"><use href="#info"/></svg>
<div class="fld" style="left:124px;top:318px;width:625px;height:19px"></div>
<div class="btn" style="left:755px;top:316px;width:98px;height:24px"></div>
<svg class="a" style="left:763px;top:320px" width="16" height="16"><use href="#mag"/></svg>
<div class="t" style="left:782px;top:322px">Auswählen...</div>
<div class="t" style="left:18px;top:353px">Schlüssel</div>
<svg class="a" style="left:116px;top:354px" width="8" height="8"><use href="#info"/></svg>
<div class="fld" style="left:124px;top:349px;width:625px;height:19px"></div>
<div class="btn" style="left:755px;top:347px;width:98px;height:24px"></div>
<svg class="a" style="left:763px;top:351px" width="16" height="16"><use href="#mag"/></svg>
<div class="t" style="left:782px;top:353px">Auswählen...</div>
<div class="t" style="left:18px;top:381px">Inhalt:</div>
<svg class="a" style="left:116px;top:382px" width="8" height="8"><use href="#info"/></svg>
<div class="fld" style="left:124px;top:377px;width:625px;height:19px"></div>
<div class="t" style="left:129px;top:381px;color:#ACA899">Heino</div>
<div class="btn" style="left:20px;top:494px;width:73px;height:24px"></div>
<svg class="a" style="left:27px;top:498px" width="16" height="16"><path d="M6 3 L2 7.5 L6 12 M9 3 L13 7.5 L10 11" stroke="#333" stroke-width="1.4" fill="none"/><rect x="8" y="11" width="7" height="3" rx="1" fill="#D83030"/></svg>
<div class="t" style="left:47px;top:500px">Löschen</div>
<div class="dbtn" style="left:100px;top:494px;width:79px;height:24px"></div>
<svg class="a" style="left:107px;top:498px" width="16" height="16"><path d="M6 3 L2 7.5 L6 12 M9 3 L13 7.5 L10 11" stroke="#C0BDAE" stroke-width="1.4" fill="none"/><path d="M11 9 V15 M8 12 H14" stroke="#C0BDAE" stroke-width="2"/></svg>
<div class="t" style="left:126px;top:500px;color:#ACA899">Zuweisen</div>
<div class="dbtn" style="left:186px;top:494px;width:107px;height:24px"></div>
<svg class="a" style="left:193px;top:498px" width="16" height="16"><path d="M6 3 L2 7.5 L6 12 M9 3 L13 7.5" stroke="#C0BDAE" stroke-width="1.4" fill="none"/><circle cx="10" cy="11" r="3" fill="none" stroke="#C0BDAE" stroke-width="1.4"/></svg>
<div class="t" style="left:213px;top:500px;color:#ACA899">Inhalt einfügen</div>
<div class="dbtn" style="left:300px;top:494px;width:114px;height:24px"></div>
<svg class="a" style="left:307px;top:498px" width="16" height="16"><path d="M6 3 L2 7.5 L6 12 M9 3 L13 7.5" stroke="#C0BDAE" stroke-width="1.4" fill="none"/><path d="M6 14 L12 5" stroke="#C0BDAE" stroke-width="1.6"/></svg>
<div class="t" style="left:327px;top:500px;color:#ACA899">Markup einfügen</div>
<div class="t" style="left:429px;top:500px">Direktauswahl</div>
<div class="fld" style="left:502px;top:496px;width:352px;height:19px"></div>
<!-- Inhalt des Aspekts -->
<div class="grp" style="left:11px;top:539px;width:818px;height:124px"></div>
<div class="lbl" style="left:17px;top:533px">Inhalt des Aspekts</div>
<div class="fld" style="left:19px;top:550px;width:802px;height:106px"></div>
<div class="a" style="left:21px;top:552px;width:32px;height:16px;background:#FF7F50"></div>
<div class="a" style="left:57px;top:552px;width:29px;height:16px;background:#FF7F50"></div>
<div class="a" style="left:90px;top:552px;width:62px;height:16px;background:#FF7F50"></div>
<div class="a" style="left:156px;top:552px;width:14px;height:16px;background:#FF7F50"></div>
<div class="t" style="left:21px;top:555px;font-size:12px;letter-spacing:0">Heino</div>
<div class="t" style="left:57px;top:555px;font-size:12px;letter-spacing:0">Adolf</div>
<div class="t" style="left:90px;top:555px;font-size:12px;letter-spacing:0">Achenbach</div>
<div class="t" style="left:156px;top:555px;font-size:12px;letter-spacing:0">de</div>
<div class="a" style="left:36px;top:553px;width:1px;height:14px;background:#2050A0"></div>
<div class="a" style="left:802px;top:551px;width:17px;height:104px;background:linear-gradient(90deg,#F3F1EC,#FEFEFB)"></div>
<div class="a" style="left:803px;top:552px;width:15px;height:16px;border:1px solid #E8E6DC;border-radius:2px;background:#F3F2EC"></div>
<svg class="a" style="left:802px;top:552px" width="16" height="16"><use href="#upAg"/></svg>
<div class="a" style="left:803px;top:638px;width:15px;height:16px;border:1px solid #E8E6DC;border-radius:2px;background:#F3F2EC"></div>
<svg class="a" style="left:802px;top:638px" width="16" height="16"><use href="#dnAg"/></svg>
<div class="btn" style="left:835px;top:533px;width:26px;height:24px"></div>
<div class="t" style="left:843px;top:539px;font-size:12px;color:#222;-webkit-text-stroke:0.3px #222">Ω</div>
<!-- footer -->
<div class="a" style="left:4px;top:669px;width:865px;height:2px;background:#fff"></div>
<div class="btn" style="left:359px;top:683px;width:74px;height:21px"></div>
<div class="t" style="left:371px;top:688px">Speichern</div>
<div class="btn" style="left:440px;top:683px;width:74px;height:21px"></div>
<div class="t" style="left:451px;top:688px">Abbrechen</div>
</div>
<!-- status bar grip -->
<div class="a" style="left:1121px;top:861px;width:2px;height:16px;background:repeating-linear-gradient(#ACA899 0 1px,#fff 1px 2px,transparent 2px 4px)"></div>

<svg width="0" height="0" style="position:absolute">
<defs>
<linearGradient id="gBody" x1="0" y1="0" x2="0" y2="1"><stop offset="0" stop-color="#A9CDEB"/><stop offset="1" stop-color="#3F7FC2"/></linearGradient>
<linearGradient id="gSkin" x1="0" y1="0" x2="0" y2="1"><stop offset="0" stop-color="#FAD9B0"/><stop offset="1" stop-color="#E5AE78"/></linearGradient>
<linearGradient id="gBub" x1="0" y1="0" x2="0" y2="1"><stop offset="0" stop-color="#FDFAEC"/><stop offset="0.5" stop-color="#E6DC80"/><stop offset="1" stop-color="#F4EEC4"/></linearGradient>
<linearGradient id="gBook" x1="0" y1="0" x2="1" y2="0"><stop offset="0" stop-color="#3E6FA8"/><stop offset="0.5" stop-color="#6A9ED8"/><stop offset="1" stop-color="#4F86C6"/></linearGradient>
<linearGradient id="gGray" x1="0" y1="0" x2="1" y2="0"><stop offset="0" stop-color="#6E6E6E"/><stop offset="0.5" stop-color="#9A9A9A"/><stop offset="1" stop-color="#858585"/></linearGradient>
<symbol id="person" viewBox="0 0 32 32">
 <path d="M3.5 29 C3 25 5.5 21.5 10.5 20.5 L21.5 20.5 C26.5 21.5 29 25 28.5 29 C28.3 31 26.5 31.8 24 31.8 L8 31.8 C5.5 31.8 3.7 31 3.5 29Z" fill="url(#gBody)" stroke="#3A72B0" stroke-width="0.7"/>
 <path d="M13 20.5 L16 24 L19 20.5Z" fill="url(#gSkin)"/>
 <rect x="15" y="24" width="2.4" height="5" fill="#F3F3F3"/>
 <circle cx="10.6" cy="12.5" r="1.4" fill="url(#gSkin)"/><circle cx="21.4" cy="12.5" r="1.4" fill="url(#gSkin)"/>
 <ellipse cx="16" cy="12" rx="5.3" ry="7" fill="url(#gSkin)"/>
 <path d="M10.4 11 C9.8 4 12.5 1.2 16 1.2 C19.5 1.2 22.2 4 21.6 11 C21 7.5 19.5 6.2 16 6.2 C12.5 6.2 11 7.5 10.4 11Z" fill="#3D3430"/>
</symbol>
<symbol id="personG" viewBox="0 0 32 32">
 <path d="M3.5 29 C3 25 5.5 21.5 10.5 20.5 L21.5 20.5 C26.5 21.5 29 25 28.5 29 C28.3 31 26.5 31.8 24 31.8 L8 31.8 C5.5 31.8 3.7 31 3.5 29Z" fill="#8E8E8E" stroke="#777" stroke-width="0.7"/>
 <path d="M13 20.5 L16 24 L19 20.5Z" fill="#9C9C9C"/>
 <rect x="15" y="24" width="2.4" height="5" fill="#C8C8C8"/>
 <circle cx="10.6" cy="12.5" r="1.4" fill="#9C9C9C"/><circle cx="21.4" cy="12.5" r="1.4" fill="#9C9C9C"/>
 <ellipse cx="16" cy="12" rx="5.3" ry="7" fill="#9C9C9C"/>
 <path d="M10.4 11 C9.8 4 12.5 1.2 16 1.2 C19.5 1.2 22.2 4 21.6 11 C21 7.5 19.5 6.2 16 6.2 C12.5 6.2 11 7.5 10.4 11Z" fill="#6A6A6A"/>
</symbol>
<symbol id="pencil" viewBox="0 0 16 16">
 <path d="M1 15 L3 11 L12 2 L14 4 L5 13 Z" fill="#F2CF3A" stroke="#7A5A10" stroke-width="0.8"/>
 <path d="M12 2 L14 4 L15 3 L13 1Z" fill="#E23B3B"/>
 <path d="M1 15 L3 11 L5 13Z" fill="#222"/>
</symbol>
<symbol id="wand" viewBox="0 0 16 16">
 <path d="M1 15 L13 3" stroke="#111" stroke-width="2.6"/>
 <path d="M11 5 L13 3" stroke="#eee" stroke-width="2"/>
 <path d="M7 2 l1 -1.5 l1 1.5 l-1 1.5z M3 6 l0.8 -1 l0.8 1 l-0.8 1z" fill="#E8C230"/>
</symbol>
<symbol id="cross" viewBox="0 0 12 12">
 <path d="M2 2 L10 10 M10 2 L2 10" stroke="#555" stroke-width="2.6"/>
</symbol>
<symbol id="star" viewBox="0 0 12 12">
 <path d="M6 1 V11 M1.7 3.5 L10.3 8.5 M10.3 3.5 L1.7 8.5" stroke="#D8C838" stroke-width="2.8" stroke-linecap="round"/>
 <path d="M6 1 V11 M1.7 3.5 L10.3 8.5 M10.3 3.5 L1.7 8.5" stroke="#F4E668" stroke-width="1.2" stroke-linecap="round"/>
</symbol>
<symbol id="bubble" viewBox="0 0 32 32">
 <path d="M16 5 C25 5 30 9 30 14 C30 18 27 21 22 22 L24 27 L17 22.5 C8 22.5 3 19 3 14 C3 9 8 5 16 5Z" fill="url(#gBub)" stroke="#C8A070" stroke-width="1.4"/>
</symbol>
<symbol id="bubbleG" viewBox="0 0 32 32">
 <path d="M16 5 C25 5 30 9 30 14 C30 18 27 21 22 22 L24 27 L17 22.5 C8 22.5 3 19 3 14 C3 9 8 5 16 5Z" fill="#A9A9A9" stroke="#909090" stroke-width="1.4"/>
</symbol>
<symbol id="stamp" viewBox="0 0 16 16">
 <circle cx="8" cy="4" r="2.6" fill="#C8C8C8" stroke="#888" stroke-width="0.6"/>
 <rect x="7.2" y="5" width="1.6" height="6" fill="#999"/>
 <rect x="2" y="11" width="12" height="4" rx="1" fill="#D0783A" stroke="#9A4F1C" stroke-width="0.7"/>
</symbol>
<symbol id="book" viewBox="0 0 24 32">
 <rect x="1" y="1" width="22" height="30" rx="1.5" fill="url(#gBook)" stroke="#2A4F80" stroke-width="1"/>
 <rect x="1" y="1" width="4" height="30" fill="#23384F"/>
 <rect x="5" y="2" width="17" height="2" fill="#E6EEF6"/>
 <rect x="9" y="8" width="10" height="19" fill="none" stroke="#5C8FCC" stroke-width="1.2"/>
</symbol>
<symbol id="bookG" viewBox="0 0 24 32">
 <rect x="1" y="1" width="22" height="30" rx="1.5" fill="url(#gGray)" stroke="#555" stroke-width="1"/>
 <rect x="1" y="1" width="4" height="30" fill="#444"/>
 <rect x="5" y="2" width="17" height="2" fill="#C8C8C8"/>
 <rect x="9" y="8" width="10" height="19" fill="none" stroke="#8E8E8E" stroke-width="1.2"/>
</symbol>
<symbol id="people" viewBox="0 0 16 16">
 <path d="M7 15 C7 11 9 9.5 12 9.5 C15 9.5 16 11 16 15Z" fill="#5DB27A"/>
 <ellipse cx="11.5" cy="6" rx="2.6" ry="3.4" fill="#F4C59A"/>
 <path d="M8.5 8 C8.5 2 10 1 11.5 1 C13 1 14.5 2 14.5 8 C14 5 13 4 11.5 4 C10 4 9 5 8.5 8Z" fill="#B0582C"/>
 <path d="M1 16 C1 12 3 10.5 6 10.5 C9 10.5 11 12 11 16Z" fill="#5E9AD6"/>
 <ellipse cx="6" cy="7.5" rx="2.4" ry="3" fill="#F4C59A"/>
 <path d="M3.6 7 C3.6 4 4.5 4 6 4 C7.5 4 8.4 4.5 8.4 7 C7.5 5.5 4.5 5.5 3.6 7Z" fill="#3B302A"/>
</symbol>
<symbol id="treeico" viewBox="0 0 16 16">
 <path d="M7.5 13 C7.5 10 9 8.6 11.5 8.6 C14 8.6 15.5 10 15.5 13Z" fill="#62B882"/>
 <path d="M8.6 9 C8.3 3 9.5 0.6 11.6 0.6 C13.7 0.6 14.9 3 14.6 9Z" fill="#A8552E"/>
 <ellipse cx="11.6" cy="5.2" rx="2.2" ry="2.9" fill="#F4C59A"/>
 <path d="M0.5 15.8 C0.5 12 2.5 10.2 5.5 10.2 C8.5 10.2 10.5 12 10.5 15.8Z" fill="#5E9AD6" stroke="#3C6EA8" stroke-width="0.5"/>
 <ellipse cx="5.5" cy="6.8" rx="2.4" ry="3" fill="#F4C59A"/>
 <path d="M3 6.8 C2.8 3.8 4 3.2 5.5 3.2 C7 3.2 8.2 3.8 8 6.8 C7.5 5.3 6.8 5 5.5 5 C4.2 5 3.5 5.3 3 6.8Z" fill="#3B302A"/>
 <path d="M12.5 8.5 V16 M9.2 10.4 L15.8 14.1 M15.8 10.4 L9.2 14.1" stroke="#19A830" stroke-width="2.3"/>
</symbol>
<symbol id="bub2" viewBox="0 0 16 18">
 <path d="M5.5 1.3 C8.7 1.3 10.8 2.8 10.8 5 C10.8 6.8 9.5 8 7.5 8.5 L7.8 10 L6 8.7 C2.5 8.7 0.3 7.2 0.3 5 C0.3 2.8 2.4 1.3 5.5 1.3Z" fill="url(#gBub)" stroke="#C49A5A" stroke-width="0.9"/>
 <path d="M8.6 7.3 C11.8 7.3 14 8.8 14 11 C14 12.6 12.9 13.8 11.2 14.3 L11.8 16.8 L9.6 14.7 C5.5 14.7 3.2 13.2 3.2 11 C3.2 8.8 5.4 7.3 8.6 7.3Z" fill="url(#gBub)" stroke="#C49A5A" stroke-width="0.9"/>
</symbol>
<symbol id="appicon" viewBox="0 0 16 16">
 <rect width="16" height="16" fill="#fff"/>
 <circle cx="8" cy="8" r="6.6" fill="none" stroke="#D8D8D8" stroke-width="0.7"/>
 <path d="M2.4 15.6 L7 1.4 L9.6 1.4 L14.4 15.6 L12.3 15.6 L8.3 3.8 L4.4 15.6Z" fill="#E8102A"/>
 <rect x="0" y="15" width="6.5" height="1" fill="#F04858"/><rect x="11" y="15" width="5" height="1" fill="#F04858"/>
 <path d="M1 8.4 C3 7 5 6.8 7.5 8 C8.2 8.4 9 8.4 9.8 8 C12 6.8 14 6.8 16 7.6 C14 8.4 12 9.5 10.6 10.8 L11.2 13.8 L9.6 14.6 L8.4 12 C7 11 5 10 1 8.4Z" fill="#0E0E0E"/>
</symbol>
<symbol id="mag" viewBox="0 0 16 16">
 <circle cx="10" cy="6" r="4.6" fill="#E6EEF4" stroke="#6F7E8C" stroke-width="1.3"/>
 <path d="M10 2.5 A3.5 3.5 0 0 1 13.5 6" stroke="#fff" stroke-width="1" fill="none"/>
 <path d="M1.5 14.5 L6.8 9.2" stroke="#7E8A96" stroke-width="2.2" stroke-linecap="round"/>
</symbol>
<symbol id="info" viewBox="0 0 8 8">
 <circle cx="4" cy="4" r="3.8" fill="#4F88C6"/>
 <rect x="3.3" y="1.3" width="1.4" height="1.2" fill="#fff"/>
 <rect x="3.3" y="3.1" width="1.4" height="3.4" fill="#fff"/>
</symbol>
<symbol id="upA" viewBox="0 0 16 16"><path d="M4 10 L8 6 L12 10" stroke="#4D6185" stroke-width="2" fill="none"/></symbol>
<symbol id="dnA" viewBox="0 0 16 16"><path d="M4 6 L8 10 L12 6" stroke="#4D6185" stroke-width="2" fill="none"/></symbol>
<symbol id="upAg" viewBox="0 0 16 16"><path d="M4 10 L8 6 L12 10" stroke="#C9C7BA" stroke-width="2" fill="none"/></symbol>
<symbol id="dnAg" viewBox="0 0 16 16"><path d="M4 6 L8 10 L12 6" stroke="#C9C7BA" stroke-width="2" fill="none"/></symbol>

<symbol id="addasp" viewBox="0 0 18 16">
 <path d="M9 2 C13.5 2 16 4 16 7 C16 9.5 14 11 11.5 11.3 L12.5 14 L9 11.3 C5 11 2.5 9.5 2.5 7 C2.5 4 5 2 9 2Z" fill="#F0E6A8" stroke="#C8A070" stroke-width="0.8"/>
 <path d="M1 16 C1 13 2.5 11.8 5 11.8 C7.5 11.8 9 13 9 16Z" fill="#5E9AD6" stroke="#3C6EA8" stroke-width="0.5"/>
 <ellipse cx="5" cy="9" rx="2.1" ry="2.6" fill="#F4C59A"/>
 <path d="M2.9 8.8 C2.7 6.5 3.8 6 5 6 C6.2 6 7.3 6.5 7.1 8.8 C6.6 7.6 6 7.4 5 7.4 C4 7.4 3.4 7.6 2.9 8.8Z" fill="#3B302A"/>
 <path d="M13.5 0.5 V7 M10.2 3.7 H16.8" stroke="#1BA832" stroke-width="2.2"/>
</symbol>
<symbol id="addasp2" viewBox="0 0 18 16">
 <path d="M6 2 C11 2 14 4 14 7 C14 10 11 11.5 8 11.5 L9 14 L5 11.5 C2 11 0.5 9 0.5 7 C0.5 4 3 2 6 2Z" fill="#F0E6A8" stroke="#C8A070"/>
 <rect x="1" y="7" width="7" height="9" fill="#5A8FCC" stroke="#2A4F80" stroke-width="0.8"/>
 <path d="M13 0 V7 M9.5 3.5 H16.5" stroke="#1BA832" stroke-width="2.2"/>
</symbol>
<symbol id="glass" viewBox="0 0 16 10">
 <path d="M0.8 6 H7 C7 8.5 5.5 9.3 3.9 9.3 C2.3 9.3 0.8 8.5 0.8 6Z" fill="#E4E4F0" stroke="#707070" stroke-width="1.1"/>
 <path d="M9 6 H15.2 C15.2 8.5 13.7 9.3 12.1 9.3 C10.5 9.3 9 8.5 9 6Z" fill="#E4E4F0" stroke="#707070" stroke-width="1.1"/>
 <path d="M7 6.5 Q8 5.5 9 6.5 M1 6 C1.5 3 2.5 1.5 4.5 1.3 M15 6 C14.5 3 13.5 1.5 11.5 1.3" stroke="#707070" stroke-width="1" fill="none"/>
</symbol>
<symbol id="glassD" viewBox="0 0 16 10">
 <path d="M0.8 6 H7 C7 8.5 5.5 9.3 3.9 9.3 C2.3 9.3 0.8 8.5 0.8 6Z" fill="#3A3A3A" stroke="#505050" stroke-width="1.1"/>
 <path d="M9 6 H15.2 C15.2 8.5 13.7 9.3 12.1 9.3 C10.5 9.3 9 8.5 9 6Z" fill="#3A3A3A" stroke="#505050" stroke-width="1.1"/>
 <path d="M7 6.5 Q8 5.5 9 6.5 M1 6 C1.5 3 2.5 1.5 4.5 1.3 M15 6 C14.5 3 13.5 1.5 11.5 1.3" stroke="#606060" stroke-width="1" fill="none"/>
</symbol>
</defs></svg>
</body></html>
